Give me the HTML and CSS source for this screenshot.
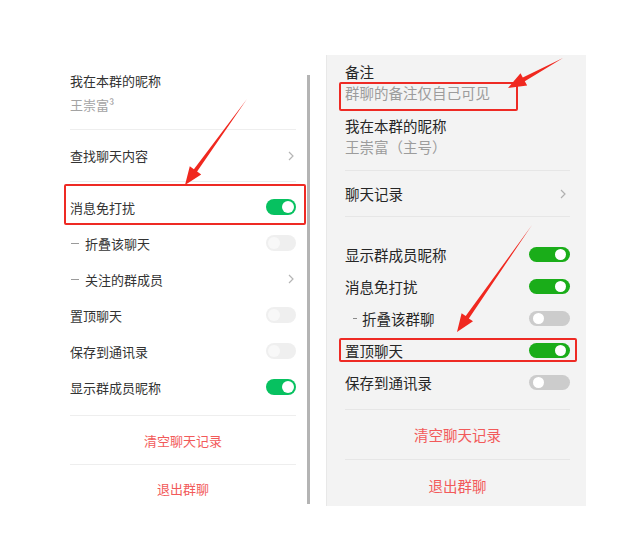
FILE: index.html
```html
<!DOCTYPE html>
<html lang="zh">
<head>
<meta charset="utf-8">
<link rel="stylesheet" href="styles.css">
</head>
<body>
<div class="page">
  <section class="left">
    <div class="lp">
      <div class="nick">
        <div class="t">我在本群的昵称</div>
        <div class="s">王崇富³</div>
      </div>
      <div class="link">
        <span>查找聊天内容</span>
        <svg class="chev" width="6" height="10" viewBox="0 0 6 10"><polyline points="1,1 5,5 1,9" fill="none" stroke="#b5b5b5" stroke-width="1.2"/></svg>
      </div>
      <div class="group">
        <div class="row hl-l"><span>消息免打扰</span><span class="sw on"></span></div>
        <div class="row"><span class="lbl"><i class="dash"></i>折叠该聊天</span><span class="sw"></span></div>
        <div class="row"><span class="lbl"><i class="dash"></i>关注的群成员</span>
          <svg class="chev" width="6" height="10" viewBox="0 0 6 10"><polyline points="1,1 5,5 1,9" fill="none" stroke="#b5b5b5" stroke-width="1.2"/></svg></div>
        <div class="row"><span>置顶聊天</span><span class="sw"></span></div>
        <div class="row"><span>保存到通讯录</span><span class="sw"></span></div>
        <div class="row"><span>显示群成员昵称</span><span class="sw on"></span></div>
      </div>
      <div class="danger d1">清空聊天记录</div>
      <div class="danger d2">退出群聊</div>
    </div>
    <div class="scrollbar"></div>
  </section>

  <section class="right">
    <div class="note">
      <div class="t">备注</div>
      <div class="s hl-note">群聊的备注仅自己可见</div>
    </div>
    <div class="nick2">
      <div class="t">我在本群的昵称</div>
      <div class="s">王崇富（主号）</div>
    </div>
    <div class="link2">
      <span>聊天记录</span>
      <svg class="chev" width="6" height="10" viewBox="0 0 6 10"><polyline points="1,1 5,5 1,9" fill="none" stroke="#b0b0b0" stroke-width="1.2"/></svg>
    </div>
    <div class="group2">
      <div class="row2"><span>显示群成员昵称</span><span class="sw2 on"></span></div>
      <div class="row2"><span>消息免打扰</span><span class="sw2 on"></span></div>
      <div class="row2"><span class="lbl2"><i class="dash2"></i>折叠该群聊</span><span class="sw2"></span></div>
      <div class="row2 hl-r"><span>置顶聊天</span><span class="sw2 on"></span></div>
      <div class="row2"><span>保存到通讯录</span><span class="sw2"></span></div>
    </div>
    <div class="danger2 e1">清空聊天记录</div>
    <div class="danger2 e2">退出群聊</div>
  </section>

  <svg class="arrows" width="624" height="555" viewBox="0 0 624 555">
    <polygon fill="#f0281f" points="247,99 197.1,171.6 201.2,174.5 185,185 189.8,166.3 193.9,169.2"/>
    <polygon fill="#f0281f" points="563,58 524.8,81.2 527.2,85.5 508,88 520.5,73.3 522.8,77.6"/>
    <polygon fill="#f0281f" points="532,225 468.9,318.4 473,321.3 457,332 461.6,313.3 465.7,316.1"/>
  </svg>
</div>
</body>
</html>
```

FILE: styles.css
```css
* { box-sizing: border-box; }
html, body {
  margin: 0;
  padding: 0;
  background: #fff;
}
body {
  font-family: "Noto Sans CJK SC", "Noto Sans", sans-serif;
  color: #333;
}
.page {
  position: relative;
  width: 624px;
  height: 555px;
  display: flex;
  align-items: flex-start;
  padding-left: 70px;
}

/* ---------- left panel ---------- */
.left {
  display: flex;
  align-items: flex-start;
}
.lp {
  width: 226px;
  padding-top: 72px;
  font-size: 13px;
}
.nick {
  padding-bottom: 15px;
  border-bottom: 1px solid #eeeeee;
}
.nick .t, .nick .s {
  line-height: 18px;
}
.nick .s {
  margin-top: 6px;
  color: #a3a3a3;
}
.link {
  height: 52px;
  display: flex;
  align-items: center;
  justify-content: space-between;
  border-bottom: 1px solid #eeeeee;
  padding-right: 2px;
}
.group {
  padding: 7px 0 10px;
  border-bottom: 1px solid #eeeeee;
}
.row {
  position: relative;
  height: 36px;
  display: flex;
  align-items: center;
  justify-content: space-between;
}
.row .chev { margin-right: 2px; }
.lbl { display: flex; align-items: center; }
.dash {
  display: inline-block;
  width: 8px;
  height: 1px;
  background: #9a9a9a;
  margin: 0 6px 0 1px;
}
.hl-l::after {
  content: "";
  position: absolute;
  left: -6px;
  right: -10px;
  top: -5px;
  bottom: 0;
  border: 2px solid #ee2a24;
  border-radius: 2px;
}
.sw {
  position: relative;
  width: 30px;
  height: 16px;
  border-radius: 8px;
  background: #efefef;
}
.sw::after {
  content: "";
  position: absolute;
  left: 2px;
  top: 2px;
  width: 12px;
  height: 12px;
  border-radius: 50%;
  background: #f8f8f8;
}
.sw.on { background: #07c160; }
.sw.on::after { left: 16px; background: #fff; }

.danger {
  display: flex;
  align-items: center;
  justify-content: center;
  color: #f25a5a;
}
.d1 { height: 49px; border-bottom: 1px solid #eeeeee; }
.d2 { height: 47px; }

.scrollbar {
  width: 3px;
  height: 429px;
  margin-top: 75px;
  margin-left: 11px;
  background: #b4b4b4;
}

/* ---------- right panel ---------- */
.right {
  width: 260px;
  height: 451px;
  margin-top: 55px;
  margin-left: 16px;
  background: #f3f3f3;
  border-left: 1px solid #e8e8e8;
  padding: 8px 16px 0 18px;
  font-size: 14.5px;
  color: #262626;
}
.note .t, .note .s, .nick2 .t, .nick2 .s { line-height: 18px; }
.note .s, .nick2 .s {
  margin-top: 3px;
  color: #9c9c9c;
}
.hl-note { position: relative; }
.hl-note::after {
  content: "";
  position: absolute;
  left: -6px;
  top: -2px;
  width: 175px;
  height: 25px;
  border: 2px solid #ee2a24;
  border-radius: 2px;
}
.nick2 {
  margin-top: 15px;
  padding-bottom: 14px;
  border-bottom: 1px solid #e6e6e6;
}
.link2 {
  height: 46px;
  display: flex;
  align-items: center;
  justify-content: space-between;
  border-bottom: 1px solid #e6e6e6;
  padding-right: 4px;
}
.group2 {
  padding: 21px 0 11px;
  border-bottom: 1px solid #e6e6e6;
}
.row2 {
  position: relative;
  height: 32px;
  display: flex;
  align-items: center;
  justify-content: space-between;
}
.lbl2 { display: flex; align-items: center; }
.dash2 {
  display: inline-block;
  width: 4px;
  height: 1px;
  background: #8a8a8a;
  margin: 0 5px 0 8px;
}
.hl-r::after {
  content: "";
  position: absolute;
  left: -6px;
  right: -7px;
  top: 4px;
  bottom: 4px;
  border: 2px solid #ee2a24;
  border-radius: 2px;
}
.sw2 {
  position: relative;
  width: 41px;
  height: 15px;
  border-radius: 8px;
  background: #cccccc;
}
.sw2::after {
  content: "";
  position: absolute;
  left: 4px;
  top: 2px;
  width: 11px;
  height: 11px;
  border-radius: 50%;
  background: #fff;
}
.sw2.on { background: #1aad19; }
.sw2.on::after { left: 26px; }

.danger2 {
  display: flex;
  align-items: center;
  justify-content: center;
  color: #f25a5a;
}
.e1 { height: 50px; border-bottom: 1px solid #e6e6e6; }
.e2 { height: 46px; padding-top: 4px; }

/* ---------- annotation arrows ---------- */
.arrows {
  position: absolute;
  left: 0;
  top: 0;
  pointer-events: none;
}
```
